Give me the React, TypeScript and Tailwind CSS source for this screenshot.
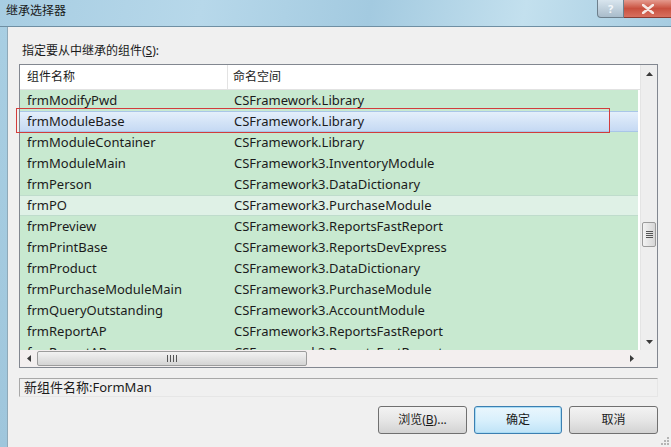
import React from "react";

const rows = [
  ["frmModifyPwd", "CSFramework.Library"],
  ["frmModuleBase", "CSFramework.Library"],
  ["frmModuleContainer", "CSFramework.Library"],
  ["frmModuleMain", "CSFramework3.InventoryModule"],
  ["frmPerson", "CSFramework3.DataDictionary"],
  ["frmPO", "CSFramework3.PurchaseModule"],
  ["frmPreview", "CSFramework3.ReportsFastReport"],
  ["frmPrintBase", "CSFramework3.ReportsDevExpress"],
  ["frmProduct", "CSFramework3.DataDictionary"],
  ["frmPurchaseModuleMain", "CSFramework3.PurchaseModule"],
  ["frmQueryOutstanding", "CSFramework3.AccountModule"],
  ["frmReportAP", "CSFramework3.ReportsFastReport"],
  ["frmReportAR", "CSFramework3.ReportsFastReport"],
];

const font = { fontFamily: '"Noto Sans", "Noto Sans CJK SC", sans-serif' };

function Arrow({ dir }: { dir: "up" | "down" | "left" | "right" }) {
  const pts = {
    up: "0,4 3.5,0 7,4",
    down: "0,0 3.5,4 7,0",
    left: "4,0 0,3.5 4,7",
    right: "0,0 4,3.5 0,7",
  }[dir];
  const vertical = dir === "up" || dir === "down";
  return (
    <svg width={vertical ? 7 : 4} height={vertical ? 4 : 7}>
      <polygon points={pts} fill="#3a3a3a" />
    </svg>
  );
}

export default function App() {
  return (
    <div
      className="w-[671px] h-[447px] overflow-hidden flex flex-col bg-gradient-to-b from-[#a9cfe3] to-[#9fc6dc] text-[#1b1b1b]"
      style={font}
    >
      {/* title bar */}
      <div className="h-[27px] shrink-0 flex items-start justify-between bg-[linear-gradient(100deg,#a7cde2_0%,#b7d8ea_30%,#a3cae0_55%,#c3e0ee_78%,#a6cce1_100%)] border-b border-[#6f8fa3]">
        <div className="pl-[6px] pt-[3px] text-[12px] leading-[16px] text-[#1a1a1a]">继承选择器</div>
        <div className="flex">
          <div className="w-[27px] h-[18px] rounded-bl-[4px] border border-t-0 border-[#6d7f8c] bg-gradient-to-b from-[#d8e5ee] to-[#a9bccb] flex items-center justify-center text-[11px] font-bold text-[#f4f8fb] leading-none">
            ?
          </div>
          <div className="w-[47px] h-[18px] border-b border-[#8a3a30] bg-gradient-to-b from-[#e49a8e] via-[#c8503f] to-[#d8705f] flex items-center justify-center">
            <svg width="12" height="10" viewBox="0 0 12 10">
              <path d="M1 1 L11 9 M11 1 L1 9" stroke="#f6e8e4" strokeWidth="2.6" strokeLinecap="round" />
            </svg>
          </div>
        </div>
      </div>

      {/* dialog body */}
      <div className="relative flex-1 ml-[7px] bg-[#f0f0f0] border-l border-[#8fa9b8] pl-[11px] pr-[13px] pt-[16px] flex flex-col">
        <div className="h-[16px] text-[12px] leading-[16px] pl-[3px]">
          指定要从中继承的组件(<span className="underline">S</span>):
        </div>

        {/* list view */}
        <div className="mt-[5px] h-[304px] border border-[#828790] bg-white flex flex-col">
          <div className="flex flex-1 min-h-0">
            <div className="flex-1 flex flex-col overflow-hidden">
              <div className="h-[25px] shrink-0 flex items-center border-b border-[#e2e2e2] bg-white text-[12px]">
                <div className="w-[208px] pl-[7px] border-r border-[#e3e3e3] h-full flex items-center">组件名称</div>
                <div className="pl-[5px]">命名空间</div>
              </div>
              {rows.map(([name, ns], i) => {
                const selected = i === 1;
                const hover = i === 5;
                return (
                  <div
                    key={name}
                    className={
                      "h-[21px] shrink-0 flex items-center text-[13px] mr-[2px] " +
                      (selected
                        ? "bg-gradient-to-b from-[#e4effb] to-[#c5d9f3] border-y border-[#a9c6e8]"
                        : hover
                        ? "bg-[#dff1e6] border-y border-[#bfdccc]"
                        : "bg-[#c8e9d0]")
                    }
                  >
                    <div className="w-[208px] pl-[7px] whitespace-nowrap">{name}</div>
                    <div className="pl-[6px] whitespace-nowrap">{ns}</div>
                  </div>
                );
              })}
            </div>

            {/* vertical scrollbar */}
            <div className="w-[17px] shrink-0 bg-[#eeeeee] border-l border-[#e4e4e4] flex flex-col items-center">
              <div className="h-[17px] flex items-center justify-center">
                <Arrow dir="up" />
              </div>
              <div className="flex-1 w-full relative">
                <div className="absolute left-[1px] right-[1px] top-[140px] h-[25px] rounded-[2px] border border-[#9b9b9b] bg-gradient-to-r from-[#f3f3f3] to-[#d6d6d6] flex flex-col items-center justify-center gap-[1px]">
                  <div className="w-[7px] h-px bg-[#555]" />
                  <div className="w-[7px] h-px bg-[#555]" />
                  <div className="w-[7px] h-px bg-[#555]" />
                  <div className="w-[7px] h-px bg-[#555]" />
                </div>
              </div>
              <div className="h-[17px] flex items-center justify-center">
                <Arrow dir="down" />
              </div>
            </div>
          </div>

          {/* horizontal scrollbar */}
          <div className="h-[17px] shrink-0 flex">
            <div className="flex-1 bg-[#f3efef] flex items-center">
              <div className="w-[17px] flex items-center justify-center">
                <Arrow dir="left" />
              </div>
              <div className="w-[270px] h-[15px] rounded-[2px] border border-[#9c9c9c] bg-gradient-to-b from-[#f2f2f2] to-[#d4d4d4] flex items-center justify-center gap-[2px]">
                <div className="w-px h-[7px] bg-[#555]" />
                <div className="w-px h-[7px] bg-[#555]" />
                <div className="w-px h-[7px] bg-[#555]" />
                <div className="w-px h-[7px] bg-[#555]" />
              </div>
              <div className="flex-1" />
              <div className="w-[17px] flex items-center justify-center">
                <Arrow dir="right" />
              </div>
            </div>
            <div className="w-[17px] bg-[#f0f0f0]" />
          </div>
        </div>

        {/* new component name */}
        <div className="mt-[10px] h-[19px] border-t border-l border-[#a8a8a8] border-r border-b border-r-[#e6e6e6] border-b-[#e6e6e6] text-[13px] leading-[17px] pl-[4px]">
          新组件名称:FormMan
        </div>

        {/* buttons */}
        <div className="mt-[9px] flex justify-end gap-[7px] text-[12px]">
          <button className="w-[89px] h-[28px] rounded-[3px] border border-[#707070] bg-gradient-to-b from-[#f3f3f3] via-[#e6e6e6] to-[#d3d3d3]">
            浏览(<span className="underline">B</span>)...
          </button>
          <button className="w-[88px] h-[28px] rounded-[3px] border border-[#3c7fb1] bg-gradient-to-b from-[#eaf6fd] via-[#d9f0fc] to-[#bfe3f7] shadow-[inset_0_0_0_1px_#a9dcf5]">
            确定
          </button>
          <button className="w-[89px] h-[28px] rounded-[3px] border border-[#707070] bg-gradient-to-b from-[#f3f3f3] via-[#e6e6e6] to-[#d3d3d3]">
            取消
          </button>
        </div>

        {/* red annotation box around selected row */}
        <div className="absolute left-[8px] top-[81px] w-[594px] h-[25px] border border-[#d23c3c] pointer-events-none" />

        {/* size grip */}
        <svg className="absolute right-[2px] bottom-[2px]" width="10" height="10">
          {[
            [8, 2], [8, 5], [5, 5], [8, 8], [5, 8], [2, 8],
          ].map(([x, y], i) => (
            <rect key={i} x={x} y={y} width="2" height="2" fill="#b5b5b5" />
          ))}
        </svg>
      </div>
    </div>
  );
}
